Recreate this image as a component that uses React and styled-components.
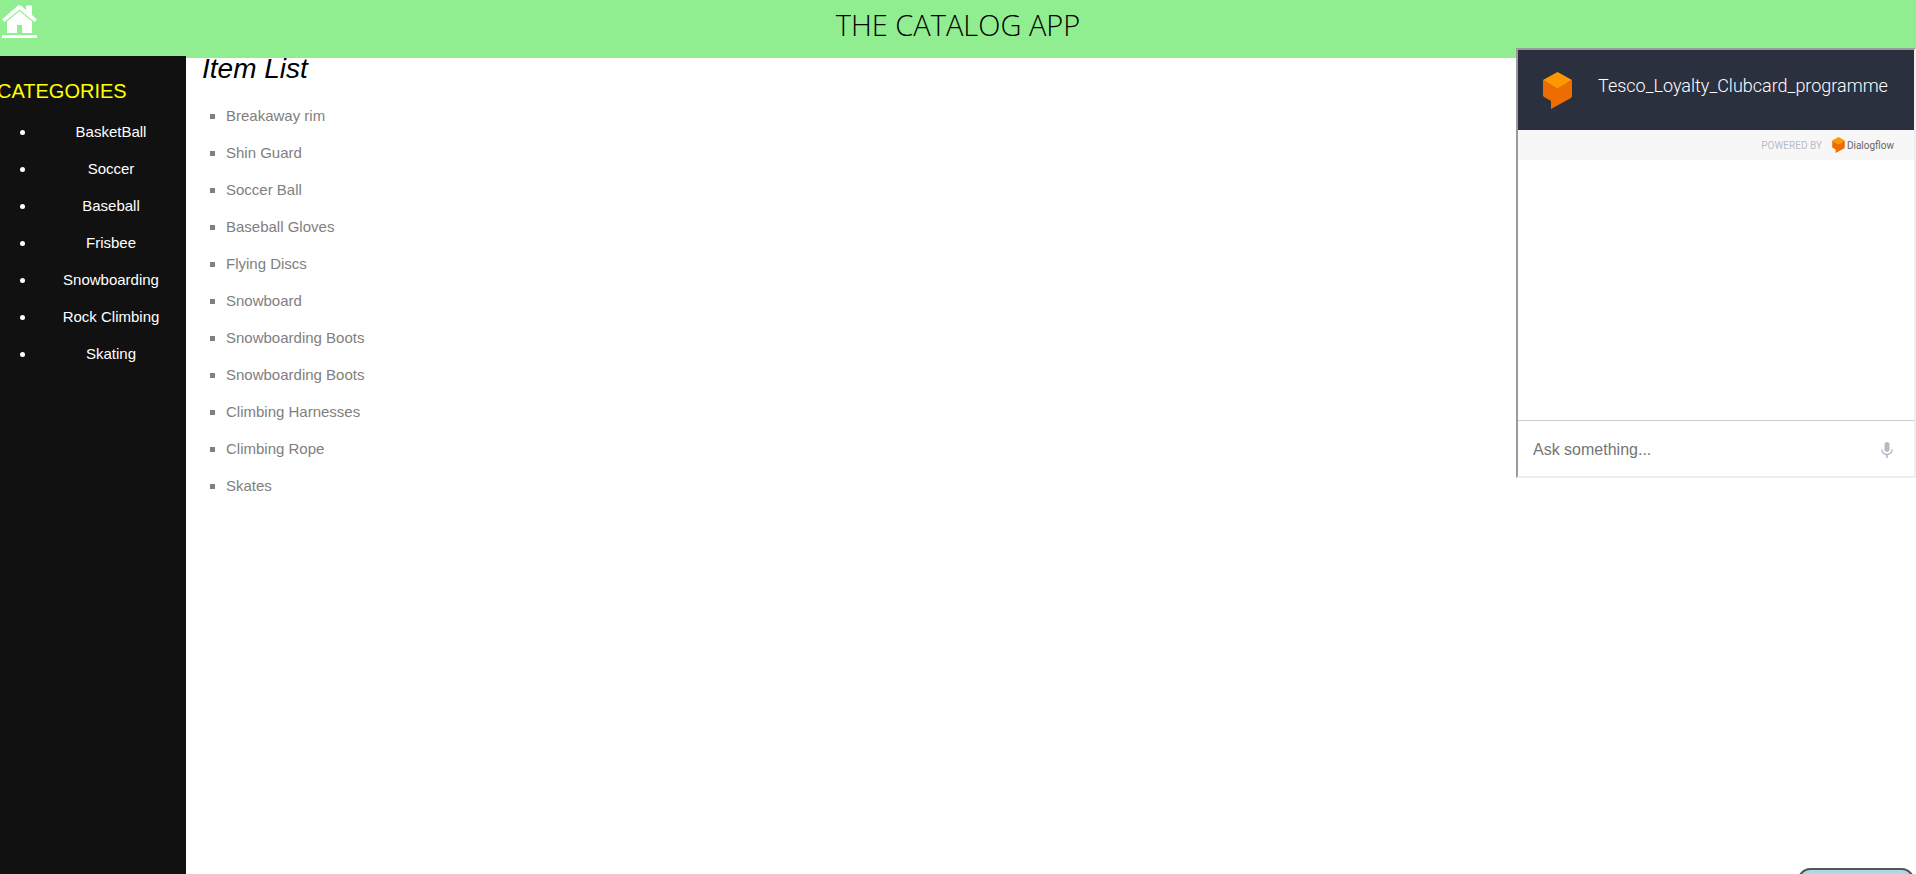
import React from "react";
import styled, { createGlobalStyle } from "styled-components";

const GlobalStyle = createGlobalStyle`
  * { box-sizing: border-box; }
  body {
    margin: 0;
    background: #fff;
    font-family: "Liberation Sans", Arial, sans-serif;
    font-size: 15px;
    overflow: hidden auto;
  }
`;

const Page = styled.div`
  display: flex;
  flex-direction: column;
  min-height: 100vh;
`;

const Header = styled.header`
  position: relative;
  z-index: 1;
  display: grid;
  grid-template-columns: 1fr auto 1fr;
  height: 58px;
  margin-bottom: -2px;
  background: lightgreen;
`;

const HomeLink = styled.a`
  justify-self: start;
  padding: 4px 1px;
  color: #fff;
  svg { display: block; }
`;

const Title = styled.h1`
  margin: 0;
  font: 300 29px/50px "Open Sans", "Noto Sans", sans-serif;
  color: #000;
`;

const Body = styled.div`
  flex: 1;
  display: flex;
`;

const Sidebar = styled.nav`
  position: relative;
  z-index: 2;
  width: 186px;
  padding-top: 20px;
  overflow: hidden;
  background: #111;
`;

const SidebarTitle = styled.h2`
  margin: 0 0 7px -3px;
  font-size: 20px;
  font-weight: 400;
  line-height: 30px;
  color: yellow;
`;

const CategoryList = styled.ul`
  margin: 0;
  padding: 0 0 0 36px;
  color: #fff;
  text-align: center;
  line-height: 37px;
`;

const CategoryLink = styled.a`
  color: #fff;
  text-decoration: none;
`;

const Main = styled.main`
  flex: 1;
  padding-left: 16px;
`;

const MainTitle = styled.h2`
  margin: 0 0 15px;
  font-size: 28px;
  font-style: italic;
  font-weight: 400;
  line-height: 26px;
  color: #000;
`;

const ItemList = styled.ul`
  margin: 0;
  padding: 0 0 0 24px;
  list-style: square;
  color: gray;
  line-height: 37px;
`;

const ItemLink = styled.a`
  color: gray;
  text-decoration: none;
`;

const Chat = styled.section`
  position: fixed;
  z-index: 3;
  top: 48px;
  right: 0;
  display: flex;
  flex-direction: column;
  width: 400px;
  height: 430px;
  border: 2px solid;
  border-color: #9a9a9a #eee #eee #9a9a9a;
  background: #fff;
  font-family: Roboto, sans-serif;
`;

const ChatHeader = styled.header`
  display: flex;
  align-items: center;
  gap: 26px;
  height: 80px;
  padding-left: 25px;
  background: #2b303e;
`;

const ChatTitle = styled.h3`
  margin: 0 0 8px;
  font-size: 18px;
  font-weight: 300;
  line-height: 24px;
  color: #fff;
`;

const PoweredBy = styled.div`
  display: flex;
  align-items: center;
  justify-content: flex-end;
  gap: 10px;
  height: 30px;
  padding-right: 20px;
  background: #f7f7f7;
  font-size: 10px;
  color: #b7bbc8;
`;

const Brand = styled.a`
  display: flex;
  align-items: center;
  gap: 2px;
  font-size: 10px;
  color: #666;
  text-decoration: none;
`;

const Messages = styled.div`
  flex: 1;
`;

const AskForm = styled.form`
  display: flex;
  height: 56px;
  padding: 2px 20px 0 15px;
  border-top: 1px solid #ccc;
`;

const AskInput = styled.input`
  flex: 1;
  min-width: 0;
  padding: 0;
  border: 0;
  outline: 0;
  background: transparent;
  font: 16px "Liberation Sans", Arial, sans-serif;
  color: #2b303e;
  &::placeholder { color: #757575; opacity: 1; }
`;

const MicButton = styled.button`
  padding: 0;
  border: 0;
  background: none;
  color: #b7bbc8;
  svg { display: block; }
`;

const ChatToggle = styled.button`
  position: fixed;
  right: 2px;
  bottom: -34px;
  width: 116px;
  height: 40px;
  border: 2px solid #555;
  border-radius: 12px;
  background: lightblue;
`;

const categories = ["BasketBall", "Soccer", "Baseball", "Frisbee", "Snowboarding", "Rock Climbing", "Skating"];

const items = [
  "Breakaway rim", "Shin Guard", "Soccer Ball", "Baseball Gloves", "Flying Discs", "Snowboard",
  "Snowboarding Boots", "Snowboarding Boots", "Climbing Harnesses", "Climbing Rope", "Skates",
];

const HomeIcon = () => (
  <svg width="37" height="34" viewBox="0 0 37 34" fill="currentColor" aria-hidden="true">
    <path d="M1 15.5 L17 1.5 H20 L25 6 V1.5 H31 V11 L36 15.5 L33.5 18 L18.5 5.5 L3.5 18 Z" />
    <path d="M6 17.5 L18.5 7 L31 17.5 V29 H21 V21 H16 V29 H6 Z" />
    <path d="M1 31 H36 V34 H1 Z" />
  </svg>
);

const DialogflowIcon = ({ width, height }) => (
  <svg width={width} height={height} viewBox="0 0 29 37" aria-hidden="true">
    <path d="M14.5 0 L29 8 L14.5 17 L0 8 Z" fill="#ff9800" />
    <path d="M0 8 L14.5 16.5 L29 8 V24 Q29 25 28 26 L8 37 V29 L1 25 Q0 24 0 23 Z" fill="#ef6c00" />
  </svg>
);

const MicIcon = () => (
  <svg width="14" height="16" viewBox="4 2 16 19" fill="currentColor" aria-hidden="true">
    <path d="M12 14c1.66 0 3-1.34 3-3V5c0-1.66-1.34-3-3-3S9 3.34 9 5v6c0 1.66 1.34 3 3 3z" />
    <path d="M17.3 11c0 3-2.54 5.1-5.3 5.1S6.7 14 6.7 11H5c0 3.41 2.72 6.23 6 6.72V21h2v-3.28c3.28-.48 6-3.3 6-6.72h-1.7z" />
  </svg>
);

export default function App() {
  return (
    <Page>
      <GlobalStyle />
      <Header>
        <HomeLink href="#home" aria-label="Home"><HomeIcon /></HomeLink>
        <Title>THE CATALOG APP</Title>
      </Header>
      <Body>
        <Sidebar>
          <SidebarTitle>CATEGORIES</SidebarTitle>
          <CategoryList>
            {categories.map((name) => (
              <li key={name}><CategoryLink href="#category">{name}</CategoryLink></li>
            ))}
          </CategoryList>
        </Sidebar>
        <Main>
          <MainTitle>Item List</MainTitle>
          <ItemList>
            {items.map((name, index) => (
              <li key={index}><ItemLink href="#item">{name}</ItemLink></li>
            ))}
          </ItemList>
        </Main>
      </Body>
      <Chat>
        <ChatHeader>
          <DialogflowIcon width={29} height={37} />
          <ChatTitle>Tesco_Loyalty_Clubcard_programme</ChatTitle>
        </ChatHeader>
        <PoweredBy>
          <span>POWERED BY</span>
          <Brand href="#dialogflow"><DialogflowIcon width={13} height={16} />Dialogflow</Brand>
        </PoweredBy>
        <Messages />
        <AskForm>
          <AskInput type="text" placeholder="Ask something..." aria-label="Ask something" />
          <MicButton type="button" aria-label="Speak"><MicIcon /></MicButton>
        </AskForm>
      </Chat>
      <ChatToggle type="button" aria-label="Toggle chat" />
    </Page>
  );
}
